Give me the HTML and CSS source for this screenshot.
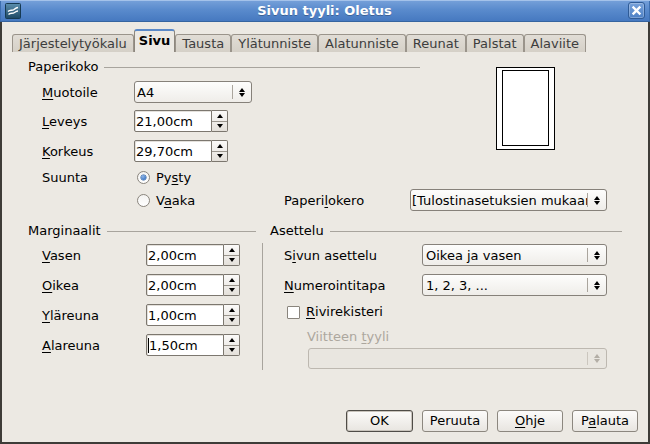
FILE: index.html
```html
<!DOCTYPE html>
<html lang="fi">
<head>
<meta charset="utf-8">
<title>Sivun tyyli: Oletus</title>
<link rel="stylesheet" href="styles.css">
</head>
<body>
<div class="window">
  <div class="titlebar">
    <svg class="app-icon" width="16" height="16" viewBox="0 0 16 16">
      <defs>
        <linearGradient id="ig" x1="0" y1="0" x2="0" y2="1">
          <stop offset="0" stop-color="#5c8fae"/>
          <stop offset="1" stop-color="#1d4863"/>
        </linearGradient>
      </defs>
      <rect x="0.5" y="0.5" width="15" height="15" rx="1" fill="url(#ig)" stroke="#173a52"/>
      <path d="M3 8.5 C5 6.5 7 8 9 6.5 C10.5 5.3 11.5 4.5 13 4.5" fill="none" stroke="#fff" stroke-width="1.4"/>
      <path d="M3.5 11.5 C5.5 9.5 7.5 11 9.5 9.5 C10.8 8.6 11.8 8 13 8" fill="none" stroke="#fff" stroke-width="1.4"/>
    </svg>
    <div class="title">Sivun tyyli: Oletus</div>
    <div class="close">
      <svg width="15" height="15" viewBox="0 0 15 15">
        <path d="M4.5 4.5 L10.5 10.5 M10.5 4.5 L4.5 10.5" stroke="#fff" stroke-width="2.4" stroke-linecap="square"/>
      </svg>
    </div>
  </div>

  <div class="client">
    <div class="tabs">
      <div class="tab">Järjestelytyökalu</div>
      <div class="tab active">Sivu</div>
      <div class="tab">Tausta</div>
      <div class="tab">Ylätunniste</div>
      <div class="tab">Alatunniste</div>
      <div class="tab">Reunat</div>
      <div class="tab">Palstat</div>
      <div class="tab">Alaviite</div>
    </div>

    <div class="page">
      <div class="top-grid">
        <div class="hdr hdr-paper"><span>Paperikoko</span><i class="rule"></i></div>
        <div class="preview"><div class="sheet"></div></div>

        <div class="lbl row2"><u>M</u>uotoile</div>
        <div class="combo combo-a4 row2">
          <span class="txt">A4</span><i class="sep"></i>
          <span class="arr"><i class="up"></i><i class="down"></i></span>
        </div>

        <div class="lbl row3"><u>L</u>eveys</div>
        <div class="spin row3">
          <span class="entry">21,00cm</span>
          <span class="arrows"><span><i class="up"></i></span><span><i class="down"></i></span></span>
        </div>

        <div class="lbl row4"><u>K</u>orkeus</div>
        <div class="spin row4">
          <span class="entry">29,70cm</span>
          <span class="arrows"><span><i class="up"></i></span><span><i class="down"></i></span></span>
        </div>

        <div class="lbl row5">Suunta</div>
        <div class="radio-line row5"><i class="radio on"></i><span>Py<u>s</u>ty</span></div>

        <div class="radio-line row6"><i class="radio"></i><span>V<u>a</u>aka</span></div>
        <div class="lbl2 row6">Paperi<u>l</u>okero</div>
        <div class="combo combo-tray row6">
          <span class="txt">[Tulostinasetuksien mukaan]</span><i class="sep"></i>
          <span class="arr"><i class="up"></i><i class="down"></i></span>
        </div>
      </div>

      <div class="bottom">
        <div class="col-left">
          <div class="hdr"><span>Marginaalit</span><i class="rule"></i></div>
          <div class="rows">
            <div class="mrow">
              <span class="mlbl"><u>V</u>asen</span>
              <div class="spin">
                <span class="entry">2,00cm</span>
                <span class="arrows"><span><i class="up"></i></span><span><i class="down"></i></span></span>
              </div>
            </div>
            <div class="mrow">
              <span class="mlbl"><u>O</u>ikea</span>
              <div class="spin">
                <span class="entry">2,00cm</span>
                <span class="arrows"><span><i class="up"></i></span><span><i class="down"></i></span></span>
              </div>
            </div>
            <div class="mrow">
              <span class="mlbl"><u>Y</u>läreuna</span>
              <div class="spin">
                <span class="entry">1,00cm</span>
                <span class="arrows"><span><i class="up"></i></span><span><i class="down"></i></span></span>
              </div>
            </div>
            <div class="mrow">
              <span class="mlbl"><u>A</u>lareuna</span>
              <div class="spin">
                <span class="entry"><i class="cursor"></i>1,50cm</span>
                <span class="arrows"><span><i class="up"></i></span><span><i class="down"></i></span></span>
              </div>
            </div>
          </div>
        </div>

        <i class="vsep"></i>

        <div class="col-right">
          <div class="hdr"><span>Asettelu</span><i class="rule"></i></div>
          <div class="rows">
            <div class="arow">
              <span class="albl">S<u>i</u>vun asettelu</span>
              <div class="combo combo-wide">
                <span class="txt">Oikea ja vasen</span><i class="sep"></i>
                <span class="arr"><i class="up"></i><i class="down"></i></span>
              </div>
            </div>
            <div class="arow">
              <span class="albl"><u>N</u>umerointitapa</span>
              <div class="combo combo-wide">
                <span class="txt">1, 2, 3, ...</span><i class="sep"></i>
                <span class="arr"><i class="up"></i><i class="down"></i></span>
              </div>
            </div>
          </div>
          <div class="check-line"><i class="check"></i><span><u>R</u>ivirekisteri</span></div>
          <div class="dis-label">Viitteen <u>t</u>yyli</div>
          <div class="combo combo-disabled">
            <span class="txt"></span><i class="sep"></i>
            <span class="arr"><i class="up"></i><i class="down"></i></span>
          </div>
        </div>
      </div>
    </div>

    <div class="buttons">
      <div class="btn default">OK</div>
      <div class="btn">Peruuta</div>
      <div class="btn"><u>O</u>hje</div>
      <div class="btn">P<u>a</u>lauta</div>
    </div>
  </div>
</div>
</body>
</html>
```

FILE: styles.css
```css
* { box-sizing: border-box; }
html, body { margin: 0; padding: 0; }
body {
  width: 650px;
  height: 444px;
  overflow: hidden;
  background: #ece9e3;
  font-family: "DejaVu Sans", "Noto Sans", sans-serif;
  font-size: 13px;
  color: #000;
}
u { text-decoration: underline; text-underline-offset: 2px; }
i { font-style: normal; display: block; }

.window {
  width: 650px;
  height: 444px;
  display: flex;
  flex-direction: column;
}

/* title bar */
.titlebar {
  height: 22px;
  flex: none;
  display: flex;
  align-items: center;
  padding: 0 5px 0 5px;
  background: linear-gradient(#77a1da, #5a8bcd 45%, #4679c0);
  border-bottom: 1px solid #36649f;
  box-shadow: inset 0 1px 0 #a4c2ea, inset 1px 0 0 #3d6fb0, inset -1px 0 0 #3d6fb0;
}
.app-icon { flex: none; }
.title {
  flex: 1;
  text-align: center;
  color: #fff;
  font-weight: bold;
  font-size: 13px;
  text-shadow: 0 1px 0 rgba(0, 0, 0, 0.25);
}
.close {
  flex: none;
  width: 17px;
  height: 17px;
  border: 1px solid #2f5b96;
  border-radius: 3px;
  background: linear-gradient(#78a2da, #4d80c5);
  box-shadow: inset 0 0 0 1px rgba(255, 255, 255, 0.25);
  display: flex;
  align-items: center;
  justify-content: center;
}

/* client area */
.client {
  flex: 1;
  display: flex;
  flex-direction: column;
  border: 2px solid #3e3c38;
  border-top: none;
}

.tabs {
  height: 30px;
  flex: none;
  display: flex;
  align-items: flex-end;
  padding-left: 10px;
}
.tab {
  height: 18px;
  padding: 0 6px;
  border: 1px solid #9a948b;
  border-bottom: none;
  border-radius: 3px 3px 0 0;
  background: linear-gradient(#e1ddd6, #d5d0c7);
  color: #3d3d3d;
  line-height: 17px;
  white-space: nowrap;
}
.tab.active {
  height: 23px;
  padding: 0 4px;
  background: #ece9e3;
  color: #000;
  font-weight: bold;
  border-color: #8d877e;
  border-top: 2px solid #5a89c8;
  line-height: 19px;
}

.page {
  padding: 8px 0 0 26px;
}

/* headers */
.hdr {
  display: flex;
  align-items: center;
  height: 14px;
  line-height: 14px;
  white-space: nowrap;
}
.hdr .rule {
  flex: 1;
  height: 1px;
  margin-left: 6px;
  background: #a8a49d;
}

/* top grid */
.top-grid {
  display: grid;
  grid-template-columns: 14px 92px 150px 126px 197px;
  grid-template-rows: 14px 36px 22px 38px 14px 32px;
  align-items: center;
}
.hdr-paper { grid-row: 1; grid-column: 1 / -1; width: 392px; }
.preview {
  grid-row: 1 / 5;
  grid-column: 5;
  align-self: start;
  margin-top: 7px;
  margin-left: 86px;
  width: 59px;
  height: 83px;
  border: 1px solid #000;
  background: #fff;
  padding: 2px 5px 3px 5px;
}
.sheet {
  width: 47px;
  height: 76px;
  border: 1px solid #000;
  background: #fff;
}
.lbl { grid-column: 2; white-space: nowrap; }
.lbl2 { grid-column: 4; white-space: nowrap; }
.row2 { grid-row: 2; }
.row3 { grid-row: 3; }
.row4 { grid-row: 4; }
.row5 { grid-row: 5; }
.row6 { grid-row: 6; }
.top-grid .combo, .top-grid .spin, .top-grid .radio-line { grid-column: 3; }
.top-grid .combo-tray { grid-column: 5; width: 197px; }
.combo-a4 { width: 118px; }

/* radio */
.radio-line {
  display: flex;
  align-items: center;
  gap: 6px;
  padding-left: 3px;
  height: 16px;
}
.radio {
  width: 13px;
  height: 13px;
  border-radius: 50%;
  border: 1px solid #8a857d;
  background: linear-gradient(#f4f3f1, #fff);
  position: relative;
}
.radio.on::after {
  content: "";
  position: absolute;
  left: 3px;
  top: 3px;
  width: 5px;
  height: 5px;
  border-radius: 50%;
  background: radial-gradient(circle at 40% 35%, #8fb5e6, #3c76c4 70%);
  box-shadow: 0 0 0 0.5px #2d5f9f;
}

/* spin */
.spin {
  display: flex;
  width: 94px;
  height: 22px;
}
.spin .entry {
  flex: 1;
  display: flex;
  align-items: center;
  background: #fff;
  border: 1px solid #7c776f;
  border-radius: 2px 0 0 2px;
  padding-left: 1px;
  white-space: nowrap;
  box-shadow: inset 1px 1px 0 #e4e1dc;
}
.spin .arrows {
  width: 16px;
  display: flex;
  flex-direction: column;
  border: 1px solid #7c776f;
  border-left: none;
  border-radius: 0 2px 2px 0;
  background: linear-gradient(#fbfaf9, #e4e0da);
}
.spin .arrows > span {
  flex: 1;
  display: flex;
  align-items: center;
  justify-content: center;
}
.spin .arrows > span + span { border-top: 1px solid #9b968e; }
.up {
  width: 0;
  height: 0;
  border-left: 3px solid transparent;
  border-right: 3px solid transparent;
  border-bottom: 4px solid #000;
}
.down {
  width: 0;
  height: 0;
  border-left: 3px solid transparent;
  border-right: 3px solid transparent;
  border-top: 4px solid #000;
}
.cursor {
  display: inline-block;
  width: 1px;
  height: 15px;
  background: #000;
}

/* combo */
.combo {
  display: flex;
  align-items: center;
  height: 22px;
  border: 1px solid #86817a;
  border-radius: 3px;
  background: linear-gradient(#fdfdfc, #efede9);
}
.combo .txt {
  flex: 1;
  padding-left: 2px;
  white-space: nowrap;
  overflow: hidden;
}
.combo .sep {
  width: 1px;
  align-self: stretch;
  margin: 3px 0;
  background: #aaa59d;
}
.combo .arr {
  width: 18px;
  display: flex;
  flex-direction: column;
  align-items: center;
  gap: 1px;
}
.combo-tray .txt { padding-left: 1px; }

/* bottom part */
.bottom {
  display: flex;
  margin-top: 8px;
}
.col-left { width: 228px; }
.rows {
  display: flex;
  flex-direction: column;
  gap: 8px;
  margin-top: 6px;
}
.mrow, .arow {
  display: flex;
  align-items: center;
  height: 22px;
}
.mlbl { margin-left: 14px; width: 104px; white-space: nowrap; }
.vsep {
  width: 1px;
  height: 127px;
  margin: 19px 0 0 6px;
  background: #a8a49d;
}
.col-right { width: 352px; margin-left: 7px; }
.albl { margin-left: 14px; width: 138px; white-space: nowrap; }
.combo-wide { width: 185px; }
.combo-wide .txt { padding-left: 3px; }

.check-line {
  display: flex;
  align-items: center;
  height: 20px;
  margin-top: 5px;
  padding-left: 17px;
  gap: 6px;
}
.check {
  width: 13px;
  height: 13px;
  border: 1px solid #8a857d;
  border-radius: 1px;
  background: #fff;
  margin-top: 3px;
}
.dis-label {
  margin: 8px 0 0 37px;
  line-height: 16px;
  color: #aca79e;
}
.combo-disabled {
  margin: 3px 0 0 38px;
  width: 299px;
  height: 21px;
  background: #e9e6e0;
  border-color: #bdb8b0;
}
.combo-disabled .sep { background: #cbc6be; }
.combo-disabled .up { border-bottom-color: #b3aea6; }
.combo-disabled .down { border-top-color: #b3aea6; }

/* buttons */
.buttons {
  margin-top: auto;
  display: flex;
  justify-content: flex-end;
  gap: 9px;
  padding: 0 10px 10px 0;
}
.btn {
  width: 66px;
  height: 22px;
  border: 1px solid #8c877f;
  border-radius: 3px;
  background: linear-gradient(#fcfbfa, #e8e5e0);
  text-align: center;
  line-height: 20px;
  white-space: nowrap;
}
.btn.default {
  width: 67px;
  border-color: #4f4c47;
  box-shadow: inset 0 0 0 1px #c9c4bc;
}
```
